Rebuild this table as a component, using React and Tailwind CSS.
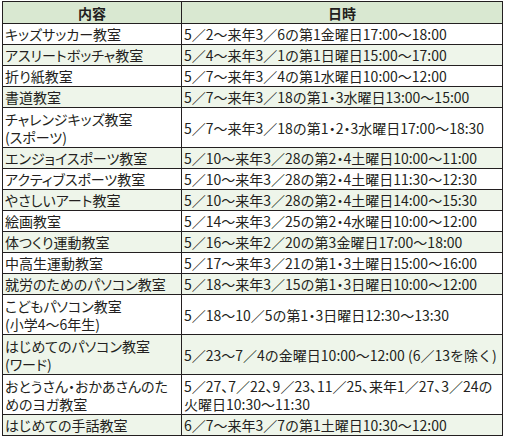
const rows = [
  { name: ["キッズサッカー教室"], date: ["5／2～来年3／6の第1金曜日17:00～18:00"] },
  { name: ["アスリートボッチャ教室"], date: ["5／4～来年3／1の第1日曜日15:00～17:00"] },
  { name: ["折り紙教室"], date: ["5／7～来年3／4の第1水曜日10:00～12:00"] },
  { name: ["書道教室"], date: ["5／7～来年3／18の第1・3水曜日13:00～15:00"] },
  { name: ["チャレンジキッズ教室", "(スポーツ)"], date: ["5／7～来年3／18の第1・2・3水曜日17:00～18:30"] },
  { name: ["エンジョイスポーツ教室"], date: ["5／10～来年3／28の第2・4土曜日10:00～11:00"] },
  { name: ["アクティブスポーツ教室"], date: ["5／10～来年3／28の第2・4土曜日11:30～12:30"] },
  { name: ["やさしいアート教室"], date: ["5／10～来年3／28の第2・4土曜日14:00～15:30"] },
  { name: ["絵画教室"], date: ["5／14～来年3／25の第2・4水曜日10:00～12:00"] },
  { name: ["体つくり運動教室"], date: ["5／16～来年2／20の第3金曜日17:00～18:00"] },
  { name: ["中高生運動教室"], date: ["5／17～来年3／21の第1・3土曜日15:00～16:00"] },
  { name: ["就労のためのパソコン教室"], date: ["5／18～来年3／15の第1・3日曜日10:00～12:00"] },
  { name: ["こどもパソコン教室", "(小学4～6年生)"], date: ["5／18～10／5の第1・3日曜日12:30～13:30"] },
  { name: ["はじめてのパソコン教室", "(ワード)"], date: ["5／23～7／4の金曜日10:00～12:00 (6／13を除く)"] },
  {
    name: ["おとうさん・おかあさんのた", "めのヨガ教室"],
    date: ["5／27、7／22、9／23、11／25、来年1／27、3／24の", "火曜日10:30～11:30"],
  },
  { name: ["はじめての手話教室"], date: ["6／7～来年3／7の第1土曜日10:30～12:00"] },
];

// narrow the middle dots the way the printed table does
function Text({ value }) {
  const parts = value.split("・");
  return parts.map((p, i) => (
    <span key={i}>
      {p}
      {i < parts.length - 1 && <span className="[font-feature-settings:'palt']">・</span>}
    </span>
  ));
}

export default function App() {
  return (
    <div className="w-[508px] h-[436px] bg-white pt-[1px] pl-[2px] font-['Noto_Sans_CJK_JP','Noto_Sans',sans-serif] text-[14px] text-[#231f20]">
      <table className="w-[500px] table-fixed border-collapse">
        <colgroup>
          <col className="w-[179px]" />
          <col className="w-[321px]" />
        </colgroup>
        <thead>
          <tr className="h-[22px] bg-[#d9e8d1]">
            <th className="border border-[#231f20] p-0 text-center font-bold leading-[18px]">内容</th>
            <th className="border border-[#231f20] p-0 text-center font-bold leading-[18px]">日時</th>
          </tr>
        </thead>
        <tbody>
          {rows.map((r, i) => {
            const tall = r.name.length > 1 || r.date.length > 1;
            return (
              <tr
                key={i}
                className={(tall ? "h-[40px] " : "h-[21px] ") + (i % 2 === 1 ? "bg-[#eef5ea]" : "bg-white")}
              >
                <td className="border border-[#231f20] px-[2px] py-0 align-middle leading-[18px] whitespace-nowrap [font-feature-settings:'palt']">
                  {r.name.map((t, j) => (
                    <div key={j}>{t}</div>
                  ))}
                </td>
                <td className="border border-[#231f20] px-[2px] py-0 align-middle leading-[18px] whitespace-nowrap">
                  {r.date.map((t, j) => (
                    <div key={j} className={r.date.length > 1 && j === 0 ? "[font-feature-settings:'palt']" : ""}>
                      <Text value={t} />
                    </div>
                  ))}
                </td>
              </tr>
            );
          })}
        </tbody>
      </table>
    </div>
  );
}
